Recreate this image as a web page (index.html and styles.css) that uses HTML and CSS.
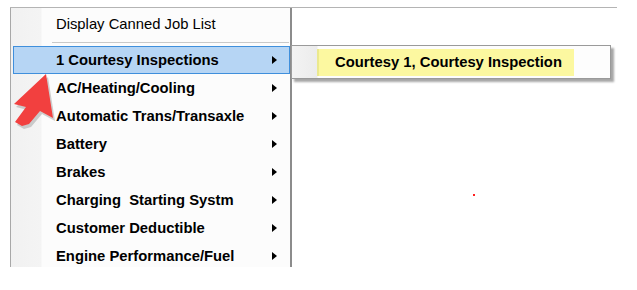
FILE: index.html
```html
<!DOCTYPE html>
<html lang="en">
<head>
    <meta charset="UTF-8">
    <title>Canned Job List</title>
    <link rel="stylesheet" href="styles.css">
</head>
<body>
    <div class="page">
        <div class="window">
            <div class="menu">
                <div class="menu-top">Display Canned Job List</div>
                <div class="separator"></div>
                <div class="menu-item active"><span>1 Courtesy Inspections</span><i class="caret"></i></div>
                <div class="menu-item"><span>AC/Heating/Cooling</span><i class="caret"></i></div>
                <div class="menu-item"><span>Automatic Trans/Transaxle</span><i class="caret"></i></div>
                <div class="menu-item"><span>Battery</span><i class="caret"></i></div>
                <div class="menu-item"><span>Brakes</span><i class="caret"></i></div>
                <div class="menu-item"><span>Charging&nbsp; Starting Systm</span><i class="caret"></i></div>
                <div class="menu-item"><span>Customer Deductible</span><i class="caret"></i></div>
                <div class="menu-item"><span>Engine Performance/Fuel</span><i class="caret"></i></div>
            </div>
            <div class="side">
                <div class="submenu">
                    <div class="sub-item">Courtesy 1, Courtesy Inspection</div>
                </div>
            </div>
        </div>

        <!-- annotation arrow drawn over the screenshot -->
        <svg class="pointer" width="637" height="290" viewBox="0 0 637 290">
            <polygon points="48,77 55,121 42,114 31,127 24,129 17,125 28,110 16,107" fill="#a8a8a8" opacity="0.55"/>
            <polygon points="46,74 53,118 40,111 29,124 22,126 15,122 26,107 14,104" fill="#f2403f"/>
        </svg>
        <div class="dot"></div>
    </div>
</body>
</html>
```

FILE: styles.css
```css
body {
    margin: 0;
    background-color: white;
    font-family: "Liberation Sans", Arial, sans-serif;
    color: #000;
}
.page {
    position: relative;
    width: 637px;
    height: 290px;
    overflow: hidden;
}
.window {
    display: flex;
    margin: 7px 0 0 10px;
    width: 607px;
    border-top: 1px solid #b4b4b4;
}
.menu {
    width: 279px;
    height: 259px;
    border-left: 1px solid #a8a8a8;
    border-right: 2px solid #8c8c8c;
    background: linear-gradient(to right, #f1f1f1 0, #f4f4f4 30px, #fcfcfc 31px, #fcfcfc 100%);
    font-size: 14.8px;
}
.menu-top {
    height: 32px;
    line-height: 32px;
    padding-left: 45px;
}
.separator {
    height: 1px;
    margin: 2px 1px 3px 41px;
    background-color: #c9c9c9;
}
.menu-item {
    display: flex;
    justify-content: space-between;
    align-items: center;
    box-sizing: border-box;
    height: 28px;
    margin: 0 0 0 2px;
    padding: 0 12px 0 42px;
    border: 1px solid transparent;
    font-weight: bold;
}
.menu-item.active {
    background-color: #b6d5f4;
    border-color: #3f8fdc;
}
.caret {
    width: 0;
    height: 0;
    border-left: 5px solid #000;
    border-top: 4px solid transparent;
    border-bottom: 4px solid transparent;
}
.side {
    flex: 1;
}
.submenu {
    box-sizing: border-box;
    width: 320px;
    height: 34px;
    margin: 37px 0 0 -1px;
    padding-top: 3px;
    border: 1px solid #9a9a9a;
    background: linear-gradient(to right, #f3f3f3 0, #ececec 25px, #fdfdfd 26px, #fdfdfd 100%);
    box-shadow: 3px 3px 2px rgba(0, 0, 0, 0.35);
}
.sub-item {
    box-sizing: border-box;
    width: 257px;
    height: 27px;
    line-height: 27px;
    margin-left: 25px;
    padding-left: 16px;
    border-left: 2px solid #ebe98e;
    background-color: #fcf8a0;
    font-size: 14.8px;
    font-weight: bold;
}
.pointer {
    position: absolute;
    left: 0;
    top: 0;
    pointer-events: none;
}
.dot {
    position: absolute;
    left: 473px;
    top: 194px;
    width: 2px;
    height: 2px;
    background-color: #ff2020;
}
```
